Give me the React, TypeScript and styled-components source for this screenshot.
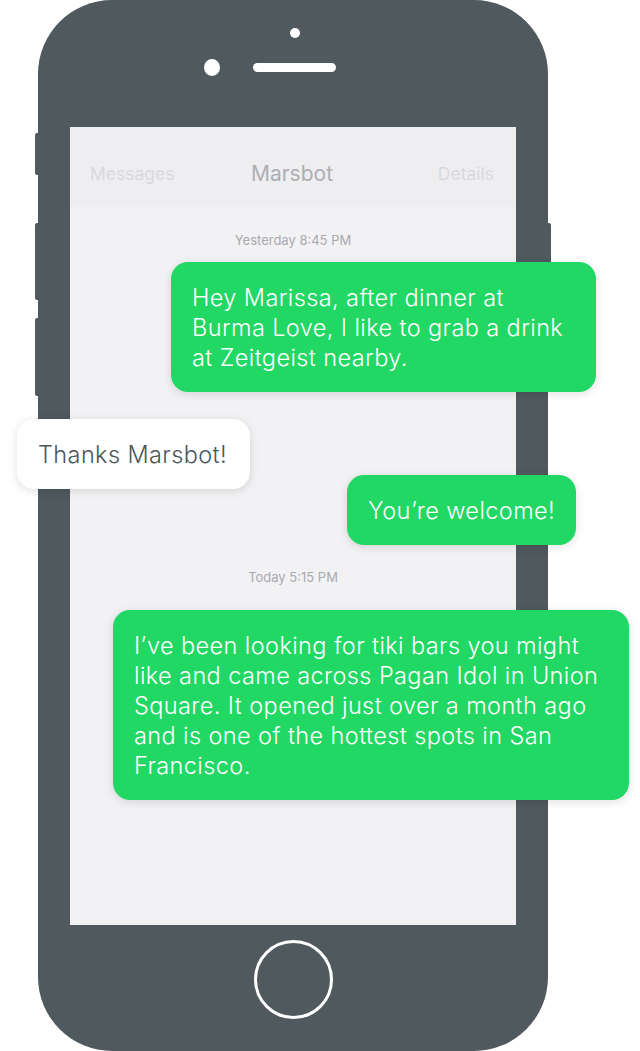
import React from "react";
import styled, { createGlobalStyle } from "styled-components";

const GlobalStyle = createGlobalStyle`
  html, body {
    margin: 0;
    padding: 0;
    background: #ffffff;
    font-family: Inter, "Noto Sans", Roboto, sans-serif;
  }
  * { box-sizing: border-box; }
`;

const BODY = "#4f595e";
const GREEN = "#21d865";

const Page = styled.div`
  width: 640px;
  height: 1051px;
  overflow: hidden;
  display: flex;
  padding-left: 35px;
`;

const Rail = styled.div`
  width: 3px;
  display: flex;
  flex-direction: column;
  align-items: stretch;
`;

const SideButton = styled.div<{ $top: number; $h: number; $side: "left" | "right" }>`
  margin-top: ${(p) => p.$top}px;
  height: ${(p) => p.$h}px;
  background: ${BODY};
  border-radius: ${(p) => (p.$side === "left" ? "2px 0 0 2px" : "0 2px 2px 0")};
`;

const Body = styled.div`
  width: 510px;
  height: 1051px;
  background: ${BODY};
  border-radius: 74px;
  display: flex;
  flex-direction: column;
  align-items: stretch;
  position: relative;
`;

const Top = styled.div`
  height: 127px;
  display: flex;
  flex-direction: column;
  align-items: center;
  padding-top: 28px;
`;

const Camera = styled.div`
  width: 10px;
  height: 10px;
  border-radius: 50%;
  background: #ffffff;
  margin-left: 3px;
`;

const SensorRow = styled.div`
  width: 100%;
  margin-top: 21px;
  display: grid;
  grid-template-columns: 1fr 83px 1fr;
  align-items: center;
  padding-left: 3px;
`;

const Sensor = styled.div`
  justify-self: end;
  width: 16px;
  height: 17px;
  border-radius: 50%;
  background: #ffffff;
  margin-right: 33px;
`;

const Speaker = styled.div`
  width: 83px;
  height: 9px;
  border-radius: 5px;
  background: #ffffff;
`;

const Screen = styled.div`
  margin: 0 32px;
  height: 798px;
  background: #f2f2f4;
  display: flex;
  flex-direction: column;
  align-items: stretch;
  position: relative;
  z-index: 1;
`;

const NavBar = styled.div`
  height: 80px;
  background: #eeeef1;
  display: grid;
  grid-template-columns: 1fr auto 1fr;
  align-items: center;
  padding: 12px 22px 0 20px;
`;

const NavLink = styled.span<{ $align: "start" | "end" }>`
  justify-self: ${(p) => p.$align};
  font-size: 17.5px;
  font-weight: 400;
  color: #d9d9dd;
`;

const NavTitle = styled.span`
  font-size: 21px;
  font-weight: 400;
  color: #aeaeb3;
`;

const Thread = styled.div`
  display: flex;
  flex-direction: column;
`;

const Stamp = styled.div<{ $mt: number }>`
  margin-top: ${(p) => p.$mt}px;
  text-align: center;
  font-size: 13px;
  line-height: 16px;
  font-weight: 400;
  color: #a9a9ae;
`;

const Bubble = styled.div<{
  $mine: boolean;
  $w: number;
  $mt: number;
  $offset: number;
}>`
  align-self: ${(p) => (p.$mine ? "flex-end" : "flex-start")};
  width: ${(p) => p.$w}px;
  margin-top: ${(p) => p.$mt}px;
  ${(p) => (p.$mine ? `margin-right: ${p.$offset}px;` : `margin-left: ${p.$offset}px;`)}
  background: ${(p) => (p.$mine ? GREEN : "#ffffff")};
  color: ${(p) => (p.$mine ? "#ffffff" : "#4b555a")};
  border-radius: 17px;
  box-shadow: 0 2px 10px rgba(0, 0, 0, 0.13);
  font-size: 23.5px;
  font-weight: 300;
  letter-spacing: 0.4px;
  line-height: 30px;
  padding: 21px 21px 19px;
  white-space: nowrap;
`;

const Bottom = styled.div`
  flex: 1;
  display: flex;
  justify-content: center;
  padding-top: 15px;
`;

const HomeButton = styled.div`
  width: 79px;
  height: 79px;
  border-radius: 50%;
  border: 3px solid #ffffff;
`;

export default function App() {
  return (
    <>
      <GlobalStyle />
      <Page>
        <Rail>
          <SideButton $side="left" $top={133} $h={42} />
          <SideButton $side="left" $top={48} $h={77} />
          <SideButton $side="left" $top={18} $h={78} />
        </Rail>
        <Body>
          <Top>
            <Camera />
            <SensorRow>
              <Sensor />
              <Speaker />
              <span />
            </SensorRow>
          </Top>
          <Screen>
            <NavBar>
              <NavLink $align="start">Messages</NavLink>
              <NavTitle>Marsbot</NavTitle>
              <NavLink $align="end">Details</NavLink>
            </NavBar>
            <Thread>
              <Stamp $mt={25}>Yesterday 8:45 PM</Stamp>
              <Bubble $mine $w={425} $mt={14} $offset={-80}>
                Hey Marissa, after dinner at
                <br />
                Burma Love, I like to grab a drink
                <br />
                at Zeitgeist nearby.
              </Bubble>
              <Bubble $mine={false} $w={233} $mt={27} $offset={-53}>
                Thanks Marsbot!
              </Bubble>
              <Bubble $mine $w={229} $mt={-14} $offset={-60}>
                You’re welcome!
              </Bubble>
              <Stamp $mt={24}>Today 5:15 PM</Stamp>
              <Bubble $mine $w={516} $mt={25} $offset={-113}>
                I’ve been looking for tiki bars you might
                <br />
                like and came across Pagan Idol in Union
                <br />
                Square. It opened just over a month ago
                <br />
                and is one of the hottest spots in San
                <br />
                Francisco.
              </Bubble>
            </Thread>
          </Screen>
          <Bottom>
            <HomeButton />
          </Bottom>
        </Body>
        <Rail>
          <SideButton $side="right" $top={223} $h={77} />
        </Rail>
      </Page>
    </>
  );
}
